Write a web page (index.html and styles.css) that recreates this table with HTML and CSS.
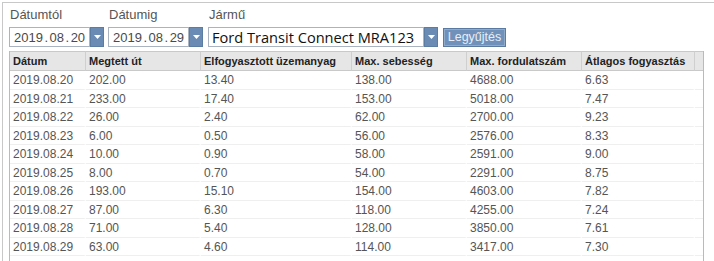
FILE: index.html
```html
<!DOCTYPE html>
<html>
<head>
<meta charset="utf-8">
<link rel="stylesheet" href="styles.css">
</head>
<body>
<div class="frame">
  <div class="filters">
    <div class="field f-date">
      <label class="lbl">Dátumtól</label>
      <div class="combo">
        <div class="box date"><span>2019</span><span class="dot">.</span><span>08</span><span class="dot">.</span><span>20</span></div>
        <div class="drop"><svg width="7" height="4" viewBox="0 0 7 4"><path d="M0 0h7L3.5 4z" fill="#fff"/></svg></div>
      </div>
    </div>
    <div class="field f-date">
      <label class="lbl">Dátumig</label>
      <div class="combo">
        <div class="box date"><span>2019</span><span class="dot">.</span><span>08</span><span class="dot">.</span><span>29</span></div>
        <div class="drop"><svg width="7" height="4" viewBox="0 0 7 4"><path d="M0 0h7L3.5 4z" fill="#fff"/></svg></div>
      </div>
    </div>
    <div class="field f-veh">
      <label class="lbl">Jármű</label>
      <div class="row-ctl">
        <div class="combo">
          <div class="box veh">Ford Transit Connect MRA123</div>
          <div class="drop"><svg width="7" height="4" viewBox="0 0 7 4"><path d="M0 0h7L3.5 4z" fill="#fff"/></svg></div>
        </div>
        <button class="btn">Legyűjtés</button>
      </div>
    </div>
  </div>
  <div class="grid">
    <table>
      <colgroup>
        <col class="c1"><col class="c2"><col class="c3"><col class="c4"><col class="c5"><col class="c6"><col class="c7">
      </colgroup>
      <thead>
        <tr><th>Dátum</th><th>Megtett út</th><th>Elfogyasztott üzemanyag</th><th>Max. sebesség</th><th>Max. fordulatszám</th><th>Átlagos fogyasztás</th><th class="fill"></th></tr>
      </thead>
      <tbody>
        <tr><td>2019.08.20</td><td>202.00</td><td>13.40</td><td>138.00</td><td>4688.00</td><td>6.63</td><td class="fill"></td></tr>
        <tr><td>2019.08.21</td><td>233.00</td><td>17.40</td><td>153.00</td><td>5018.00</td><td>7.47</td><td class="fill"></td></tr>
        <tr><td>2019.08.22</td><td>26.00</td><td>2.40</td><td>62.00</td><td>2700.00</td><td>9.23</td><td class="fill"></td></tr>
        <tr><td>2019.08.23</td><td>6.00</td><td>0.50</td><td>56.00</td><td>2576.00</td><td>8.33</td><td class="fill"></td></tr>
        <tr><td>2019.08.24</td><td>10.00</td><td>0.90</td><td>58.00</td><td>2591.00</td><td>9.00</td><td class="fill"></td></tr>
        <tr><td>2019.08.25</td><td>8.00</td><td>0.70</td><td>54.00</td><td>2291.00</td><td>8.75</td><td class="fill"></td></tr>
        <tr><td>2019.08.26</td><td>193.00</td><td>15.10</td><td>154.00</td><td>4603.00</td><td>7.82</td><td class="fill"></td></tr>
        <tr><td>2019.08.27</td><td>87.00</td><td>6.30</td><td>118.00</td><td>4255.00</td><td>7.24</td><td class="fill"></td></tr>
        <tr><td>2019.08.28</td><td>71.00</td><td>5.40</td><td>128.00</td><td>3850.00</td><td>7.61</td><td class="fill"></td></tr>
        <tr><td>2019.08.29</td><td>63.00</td><td>4.60</td><td>114.00</td><td>3417.00</td><td>7.30</td><td class="fill"></td></tr>
      </tbody>
    </table>
  </div>
</div>
</body>
</html>
```
FILE: styles.css
```css
html, body { margin: 0; padding: 0; background: #fff; }
body { width: 714px; height: 261px; overflow: hidden; font-family: "Liberation Sans", Arial, sans-serif; }

.frame {
  margin: 2px 0 0 2px;
  border-top: 1px solid #c8c8c8;
  border-left: 1px solid #c8c8c8;
  height: 259px;
  padding: 4px 0 0 6px;
  box-sizing: border-box;
  display: flex;
  flex-direction: column;
}

.filters { display: flex; height: 43px; flex: none; }
.field { display: flex; flex-direction: column; }
.f-date { width: 99px; }
.f-veh { margin-left: 1px; }
.lbl { font-size: 13px; color: #555; height: 20px; line-height: 16px; padding-left: 1px; }

.combo { display: flex; height: 20px; }
.box {
  border: 1px solid #a9b4c0;
  box-sizing: border-box;
  height: 20px;
  background: #fff;
  display: flex; align-items: center;
  white-space: nowrap;
  overflow: hidden;
}
.date { width: 81px; font-size: 13px; color: #4a4a4a; padding-left: 4px; }
.dot { margin: 0 1.5px; }
.veh { width: 216px; font-family: "Open Sans", "DejaVu Sans", sans-serif; font-size: 14.6px; color: #111; padding-left: 3px; }
.drop {
  width: 14px; height: 20px; background: #6a8cb4;
  display: flex; align-items: center; justify-content: center;
  box-sizing: border-box;
  border: 1px solid #5b7ca3;
}
.row-ctl { display: flex; align-items: center; }
.btn {
  margin-left: 5px;
  height: 19px; width: 63px;
  background: #6f91ba;
  border: 1px solid #5a7aa1;
  box-shadow: inset 0 0 0 1px #8eabcc;
  color: #e8eef6;
  font-family: "Liberation Sans", Arial, sans-serif;
  font-size: 12.5px;
  padding: 0;
}

.grid {
  width: 695px;
  border-left: 1px solid #a9bdd6;
  border-right: 1px solid #a9bdd6;
  box-sizing: border-box;
  flex: 1;
  margin-top: 1px;
  overflow: hidden;
}
table { border-collapse: separate; border-spacing: 0; table-layout: fixed; width: 693px; }
col.c1 { width: 76px; }
col.c2 { width: 115px; }
col.c3 { width: 151px; }
col.c4 { width: 115px; }
col.c5 { width: 115px; }
col.c6 { width: 113px; }
col.c7 { width: 8px; }

th {
  background: #e6e6e6;
  border-top: 1px solid #c9c9c9;
  border-bottom: 1px solid #c9c9c9;
  border-right: 1px solid #cfcfcf;
  height: 18px;
  padding: 0 0 0 3px;
  text-align: left;
  font-size: 11px;
  font-weight: bold;
  color: #222;
  white-space: nowrap;
  overflow: hidden;
}
th.fill { border-right: none; }
td {
  height: 16.5px;
  padding: 1px 0 0 3px;
  font-size: 12px;
  color: #555;
  border-bottom: 1px solid #efefef;
  border-right: 2px solid #fff;
  white-space: nowrap;
}
td.fill { border-right: none; }
```
